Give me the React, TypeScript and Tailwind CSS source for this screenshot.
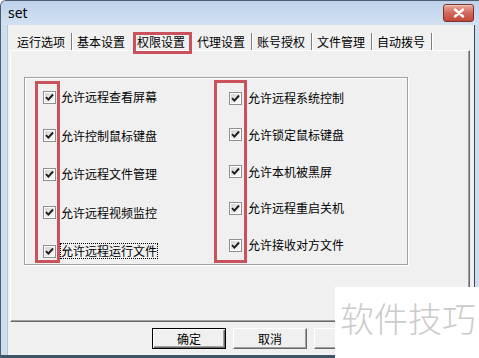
import React from "react";

const tabs = ["运行选项", "基本设置", "权限设置", "代理设置", "账号授权", "文件管理", "自动拨号"];
const leftItems = ["允许远程查看屏幕", "允许控制鼠标键盘", "允许远程文件管理", "允许远程视频监控", "允许远程运行文件"];
const rightItems = ["允许远程系统控制", "允许锁定鼠标键盘", "允许本机被黑屏", "允许远程重启关机", "允许接收对方文件"];

function CheckBox() {
  return (
    <svg width="13" height="13" viewBox="0 0 13 13" className="block">
      <defs>
        <linearGradient id="cbfill" x1="0" y1="0" x2="1" y2="1">
          <stop offset="0" stopColor="#d4d4d4" />
          <stop offset="1" stopColor="#fafafa" />
        </linearGradient>
      </defs>
      <rect x="0.5" y="0.5" width="12" height="12" fill="#fff" stroke="#8e8f8f" />
      <rect x="2" y="2" width="9" height="9" fill="url(#cbfill)" />
      <path d="M3 6.2 L5.4 8.7 L10 3.5" fill="none" stroke="#1c1c1c" strokeWidth="1.9" />
    </svg>
  );
}

function Column({
  items,
  boxClass,
  labelClass,
  focusLast,
}: {
  items: string[];
  boxClass: string;
  labelClass: string;
  focusLast?: boolean;
}) {
  return (
    <div className="flex items-start">
      {/* red annotation box around the check column */}
      <div className={`flex flex-col border-[3px] border-[#c9525c] ${boxClass}`}>
        {items.map((t) => (
          <div key={t} className="h-[18px] flex items-center">
            <CheckBox />
          </div>
        ))}
      </div>
      <div className={`flex flex-col ${labelClass}`}>
        {items.map((t, i) => (
          <div key={t} className="h-[18px] flex items-center">
            <span
              className={`border leading-[14px] text-[12px] text-black ${
                focusLast && i === items.length - 1 ? "border-dotted border-black" : "border-transparent"
              }`}
            >
              {t}
            </span>
          </div>
        ))}
      </div>
    </div>
  );
}

function Button({ label, primary }: { label: string; primary?: boolean }) {
  return (
    <div
      className={`w-[74px] h-[21px] flex items-center justify-center text-[12px] text-black bg-[#f0f0f0] border ${
        primary
          ? "border-black shadow-[inset_1px_1px_0_#ffffff,inset_-1px_-1px_0_#696969,inset_-2px_-2px_0_#a0a0a0]"
          : "border-t-white border-l-white border-r-[#696969] border-b-[#696969] shadow-[inset_-1px_-1px_0_#a0a0a0]"
      }`}
    >
      {label}
    </div>
  );
}

export default function App() {
  return (
    <div className="relative w-[479px] h-[358px] overflow-hidden rounded-tl-[6px] border-l border-t border-[#4d5c6e] bg-[#cfdeef] font-['Noto_Sans_CJK_SC',sans-serif]">
      {/* Title bar */}
      <div className="h-[24px] flex items-start justify-between pl-[7px] pr-[5px] bg-linear-to-b from-[#bdd2ea] to-[#d3e1f2]">
        <span className="mt-[4px] text-[14px] leading-[16px] text-black font-['Noto_Sans',sans-serif]">set</span>
        <div className="mt-[3px] w-[31px] h-[18px] rounded-[3px] border border-[#7a3127] bg-linear-to-b from-[#e9a99a] via-[#d2675a] to-[#c2473a] flex items-center justify-center shadow-[inset_0_1px_0_#f3c8bd]">
          <svg width="12" height="10" viewBox="0 0 12 10">
            <path d="M2 1.5 L10 8.5 M10 1.5 L2 8.5" stroke="#fff" strokeWidth="2.4" strokeLinecap="round" />
          </svg>
        </div>
      </div>

      {/* Body */}
      <div className="flex h-[330px]">
        <div className="w-[7px] bg-[#cfdeef] border-r border-[#b9c6d4]" />
        <div className="w-[466px] bg-[#f0f0f0] flex flex-col">
          {/* Tabs */}
          <div className="relative z-10 h-[25px] flex items-end pl-[9px]">
            {tabs.map((t, i) => (
              <div key={t} className="relative w-[60px] h-[17px] flex items-center">
                <span className="w-[48px] text-[12px] leading-[17px] text-black">{t}</span>
                {i !== 1 && i !== 2 && (
                  <span className="ml-[6px] w-px h-[17px] bg-[#7d7d7d] shadow-[1px_0_0_#ffffff]" />
                )}
                {i === 2 && (
                  <span className="absolute left-[-4px] top-[-1px] w-[59px] h-[22px] border-[3px] border-[#c9525c]" />
                )}
              </div>
            ))}
          </div>

          {/* Tab panel */}
          <div className="ml-[2px] w-[460px] h-[272px] border-t border-l border-white border-r-[#696969] border-b-[#696969] border-r border-b shadow-[inset_-1px_-1px_0_#a0a0a0]">
            <div className="ml-[13px] mt-[26px] w-[384px] h-[188px] border border-[#a0a0a0] shadow-[inset_1px_1px_0_#ffffff,1px_1px_0_#ffffff] pl-[10px] pt-[3px] flex items-start">
              <div className="w-[179px]">
                <Column
                  items={leftItems}
                  boxClass="w-[25px] h-[182px] pt-[4px] pl-[5px] gap-[20.5px]"
                  labelClass="pt-[7px] gap-[20.5px]"
                  focusLast
                />
              </div>
              <div className="-mt-px">
                <Column
                  items={rightItems}
                  boxClass="w-[33px] h-[183px] pt-[6px] pl-[12px] gap-[18.75px]"
                  labelClass="pt-[9px] gap-[18.75px]"
                />
              </div>
            </div>
          </div>

          {/* Buttons */}
          <div className="mt-[6px] pl-[144px] flex gap-[7px]">
            <Button label="确定" primary />
            <Button label="取消" />
            <Button label="应用" />
          </div>
        </div>
        <div className="w-[5px] bg-[#cfdeef] border-l border-[#34495c]" />
      </div>
      <div className="h-[3px] bg-[#3d5565]" />

      {/* Watermark overlay */}
      <div className="absolute left-[334px] top-[286px] right-0 bottom-0 bg-white pl-[5px] pt-[14px]">
        <span className="text-[34px] leading-none font-light text-[#cbcbcb] whitespace-nowrap">软件技巧</span>
      </div>
    </div>
  );
}
